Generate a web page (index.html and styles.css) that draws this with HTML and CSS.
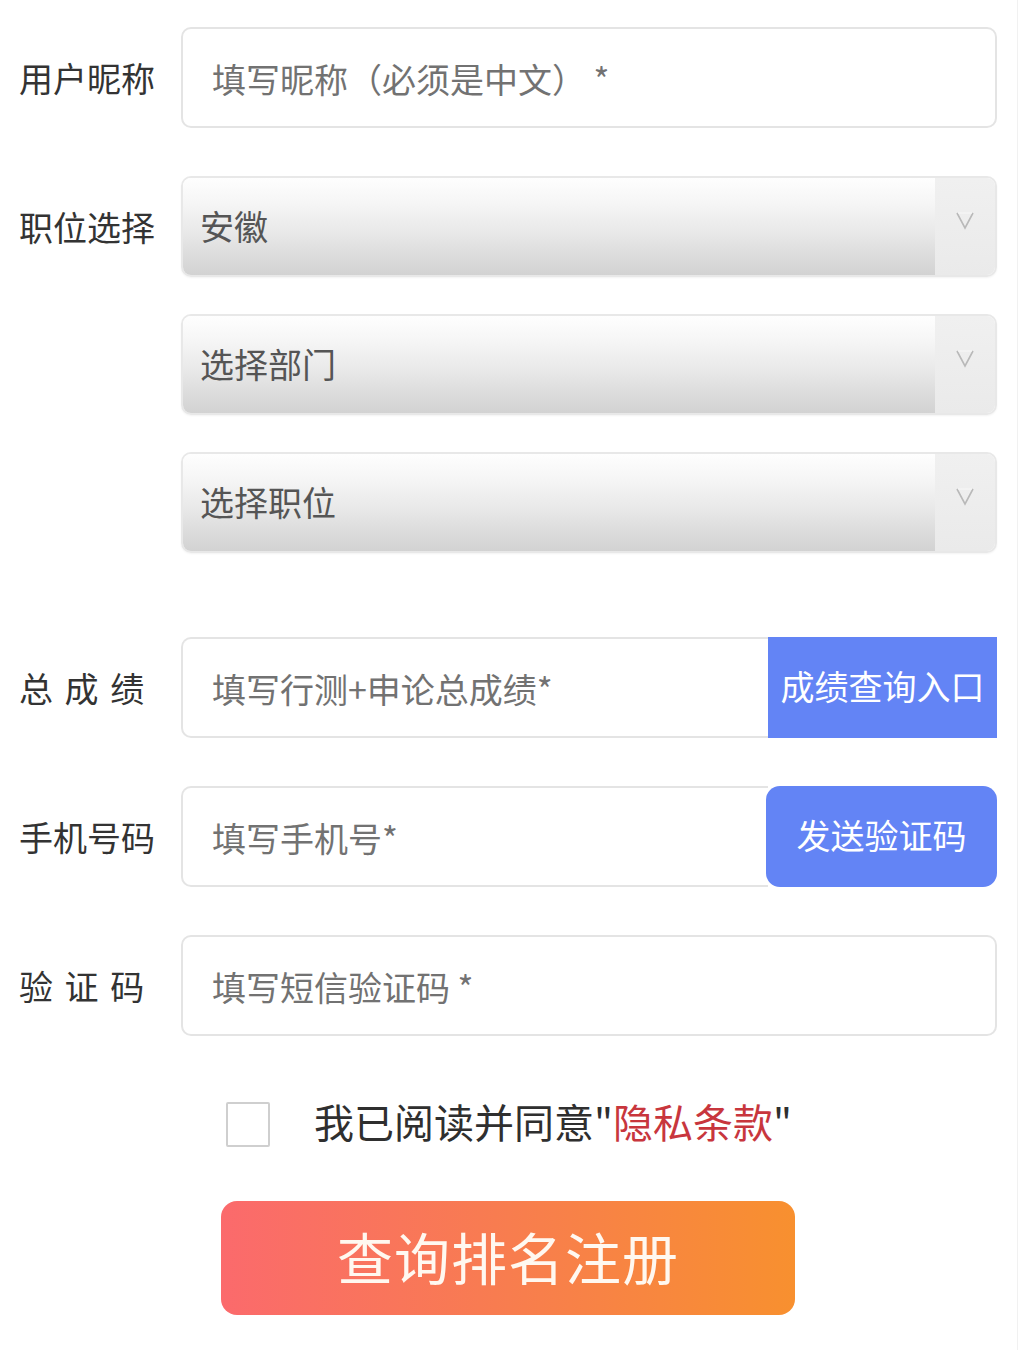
FILE: index.html
```html
<!DOCTYPE html>
<html>
	<head>
		<meta charset="utf-8">
		<meta name="viewport" content="initial-scale=1, user-scalable=0">
		<title>查询排名注册</title>
		<link rel="stylesheet" href="styles.css">
	</head>
	<body>
		<div class="page">
			<div class="form">
				<div class="row">
					<label class="label">用户昵称</label>
					<div class="field">
						<input class="text" type="text" placeholder="填写昵称（必须是中文） *">
					</div>
				</div>

				<div class="row">
					<label class="label">职位选择</label>
					<div class="select">
						<span class="value">安徽</span>
						<span class="arrow"><svg width="20" height="22" viewBox="0 0 20 22"><polyline points="2,4 10,19 18,4" fill="none" stroke="#b9b9b9" stroke-width="1.6"/><line x1="3" y1="4" x2="17" y2="4" stroke="#f7f7f7" stroke-width="1.2"/></svg></span>
					</div>
				</div>

				<div class="row sub">
					<label class="label"></label>
					<div class="select">
						<span class="value">选择部门</span>
						<span class="arrow"><svg width="20" height="22" viewBox="0 0 20 22"><polyline points="2,4 10,19 18,4" fill="none" stroke="#b9b9b9" stroke-width="1.6"/><line x1="3" y1="4" x2="17" y2="4" stroke="#f7f7f7" stroke-width="1.2"/></svg></span>
					</div>
				</div>

				<div class="row sub">
					<label class="label"></label>
					<div class="select">
						<span class="value">选择职位</span>
						<span class="arrow"><svg width="20" height="22" viewBox="0 0 20 22"><polyline points="2,4 10,19 18,4" fill="none" stroke="#b9b9b9" stroke-width="1.6"/><line x1="3" y1="4" x2="17" y2="4" stroke="#f7f7f7" stroke-width="1.2"/></svg></span>
					</div>
				</div>

				<div class="row sep">
					<label class="label spaced">总 成 绩</label>
					<div class="field joined">
						<input class="text" type="text" placeholder="填写行测+申论总成绩*">
						<a class="btn square">成绩查询入口</a>
					</div>
				</div>

				<div class="row">
					<label class="label">手机号码</label>
					<div class="field joined">
						<input class="text" type="text" placeholder="填写手机号*">
						<a class="btn round">发送验证码</a>
					</div>
				</div>

				<div class="row">
					<label class="label spaced">验 证 码</label>
					<div class="field">
						<input class="text" type="text" placeholder="填写短信验证码 *">
					</div>
				</div>
			</div>

			<div class="agree">
				<span class="check"></span>
				<p>我已阅读并同意"<span class="red">隐私条款</span>"</p>
			</div>

			<button class="submit">查询排名注册</button>
		</div>
	</body>
</html>
```

FILE: styles.css
```css
body, html{
	margin: 0;
	background-color: #ffffff;
}
.page{
	font-family: "Noto Sans CJK SC", "Noto Sans", sans-serif;
	width: 1018px;
	min-height: 1350px;
	border-right: 1px solid #f1f1f1;
	box-sizing: border-box;
	padding-top: 27px;
}
.form{
	display: flex;
	flex-direction: column;
}
.row{
	display: flex;
	align-items: center;
	height: 101px;
	margin-top: 48px;
}
.row:first-child{
	margin-top: 0;
}
.row.sub{
	margin-top: 37px;
}
.row.sep{
	margin-top: 84px;
}
.label{
	width: 162px;
	padding-left: 19px;
	font-size: 34px;
	color: #333333;
	white-space: nowrap;
}
.label.spaced{
	letter-spacing: 2px;
}

/* text inputs */
.field{
	display: flex;
	width: 816px;
	height: 101px;
}
.text{
	flex: 1;
	min-width: 0;
	box-sizing: border-box;
	height: 100%;
	border: 2px solid #e4e4e4;
	border-radius: 10px;
	padding: 2px 0 0 29px;
	font-family: inherit;
	font-size: 34px;
	color: #333;
	background: #fff;
	outline: none;
}
.text::placeholder{
	color: #727272;
}
.joined .text{
	border-radius: 10px 0 0 10px;
	border-right: none;
}
.btn{
	display: flex;
	align-items: center;
	justify-content: center;
	width: 229px;
	height: 100%;
	background-color: #6384f5;
	color: #ffffff;
	font-size: 34px;
	padding-bottom: 4px;
	box-sizing: border-box;
}
.btn.round{
	border-radius: 14px;
	margin-left: -2px;
	width: 231px;
}

/* selects */
.select{
	display: flex;
	width: 816px;
	height: 101px;
	box-sizing: border-box;
	border: 2px solid #e8e8e8;
	border-radius: 10px;
	overflow: hidden;
	box-shadow: 0 1px 2px rgba(0,0,0,0.05);
}
.value{
	flex: 1;
	display: flex;
	align-items: center;
	padding-left: 17px;
	padding-bottom: 2px;
	font-size: 34px;
	color: #555555;
	background: linear-gradient(#fefefe 0%, #f6f6f6 25%, #e9e9e9 55%, #dcdcdc 80%, #d2d2d2 100%);
}
.arrow{
	width: 60px;
	display: flex;
	justify-content: center;
	padding-top: 31px;
	box-sizing: border-box;
	background: linear-gradient(#f0f0f0, #eaeaea);
}

/* agreement */
.agree{
	display: flex;
	align-items: center;
	margin-top: 59px;
	padding-left: 226px;
}
.check{
	width: 44px;
	height: 45px;
	box-sizing: border-box;
	border: 2px solid #cfcfcf;
	border-radius: 2px;
}
.agree p{
	margin: 0 0 6px 44px;
	font-size: 40px;
	line-height: 1.3;
	color: #2f2f2f;
}
.red{
	color: #c8363d;
}

.submit{
	display: block;
	margin: 48px 0 0 221px;
	width: 574px;
	height: 114px;
	border: none;
	border-radius: 16px;
	background: linear-gradient(90deg, #fb6a6c 0%, #f87b52 45%, #f8902f 100%);
	color: #fff8f0;
	font-family: inherit;
	font-size: 56px;
	letter-spacing: 1px;
	padding-bottom: 6px;
}
```
